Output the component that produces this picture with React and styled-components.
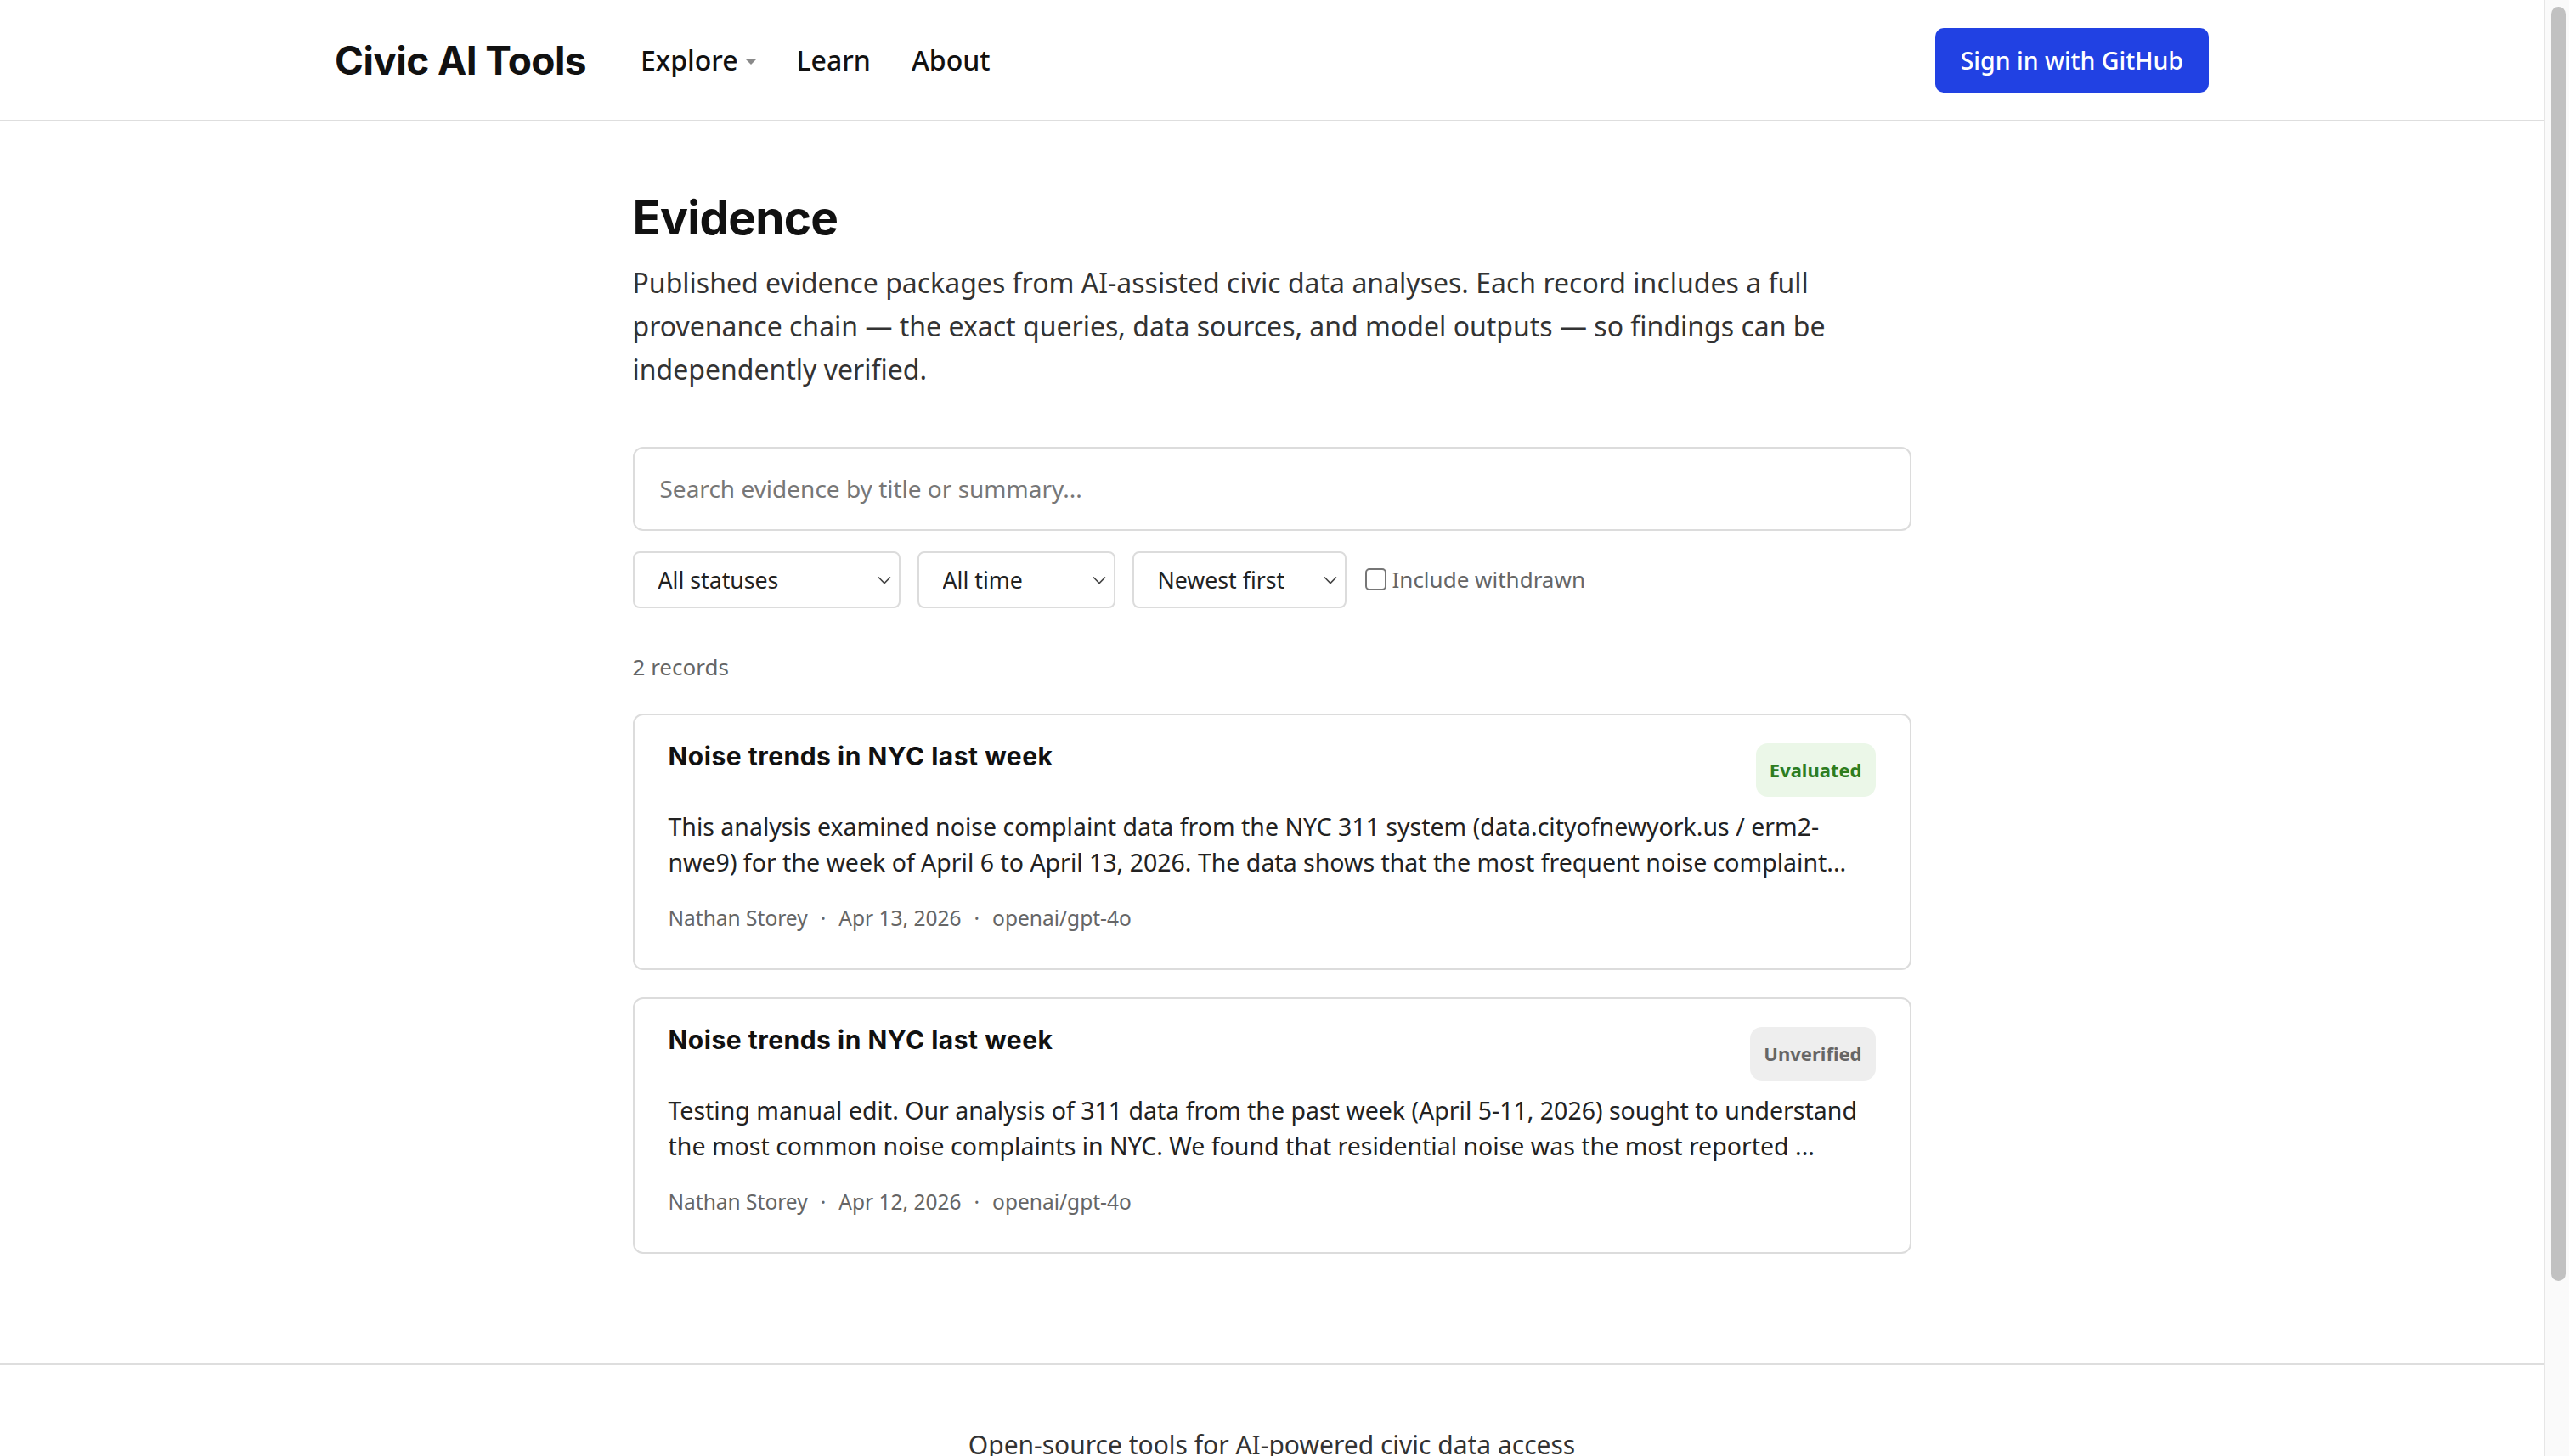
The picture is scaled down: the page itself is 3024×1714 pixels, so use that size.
import React from "react";
import styled, { createGlobalStyle } from "styled-components";

const GlobalStyle = createGlobalStyle`
  html, body {
    margin: 0;
    padding: 0;
    background: #ffffff;
  }
  body {
    font-family: "Noto Sans", "Open Sans", sans-serif;
    color: #111;
  }
  * { box-sizing: border-box; }
`;

/* Browser scrollbar as shown in the screenshot (overlay on the right edge) */
const ScrollTrack = styled.div`
  position: fixed;
  top: 0;
  right: 0;
  width: 30px;
  height: 100vh;
  background: #fafafa;
  border-left: 2px solid #e6e6e6;
  z-index: 10;
`;

const ScrollThumb = styled.div`
  position: absolute;
  top: 8px;
  left: 7px;
  width: 17px;
  height: 1500px;
  border-radius: 9px;
  background: #c1c1c1;
`;

const Page = styled.div`
  margin-right: 30px;
  display: flex;
  flex-direction: column;
`;

const Header = styled.header`
  height: 143px;
  border-bottom: 2px solid #dedede;
`;

const HeaderInner = styled.div`
  max-width: 2206px;
  height: 100%;
  margin: 0 auto;
  display: flex;
  align-items: center;
`;

const Brand = styled.a`
  font-family: "Inter", "Liberation Sans", sans-serif;
  font-weight: 700;
  font-size: 46px;
  letter-spacing: -0.6px;
  color: #111;
  text-decoration: none;
  margin-right: 64px;
`;

const Nav = styled.nav`
  display: flex;
  align-items: center;
  gap: 48px;
  flex: 1;
`;

const NavLink = styled.a`
  font-size: 32px;
  font-weight: 500;
  color: #111;
  text-decoration: none;
  display: inline-flex;
  align-items: center;
`;

const Caret = styled.span`
  display: inline-block;
  width: 0;
  height: 0;
  margin-left: 9px;
  margin-top: 4px;
  border-left: 6px solid transparent;
  border-right: 6px solid transparent;
  border-top: 6px solid #8a8a8a;
`;

const SignIn = styled.button`
  height: 76px;
  padding: 0 30px;
  border: none;
  border-radius: 10px;
  background: #2141e3;
  color: #fff;
  font-family: "Noto Sans", sans-serif;
  font-size: 28.5px;
  font-weight: 500;
  cursor: pointer;
`;

const Main = styled.main`
  width: 1505px;
  margin: 0 auto;
  padding: 80px 0 129px;
`;

const Title = styled.h1`
  font-family: "Inter", "Liberation Sans", sans-serif;
  font-weight: 700;
  font-size: 55px;
  letter-spacing: -0.8px;
  line-height: 67px;
  margin: 0 0 17px;
`;

const Intro = styled.p`
  font-size: 32px;
  line-height: 51.2px;
  color: #333;
  margin: 0 0 65px;
`;

const SearchInput = styled.input`
  display: block;
  width: 100%;
  height: 99px;
  padding: 0 30px;
  border: 2px solid #dcdcdc;
  border-radius: 12px;
  font-family: "Noto Sans", sans-serif;
  font-size: 28px;
  color: #333;
  outline: none;
  &::placeholder { color: #777; }
`;

const Filters = styled.div`
  display: flex;
  align-items: center;
  gap: 20px;
  margin-top: 24px;
`;

const SelectWrap = styled.div`
  position: relative;
  width: ${(p) => p.$w}px;
`;

const Select = styled.select`
  appearance: none;
  width: 100%;
  height: 67px;
  padding: 0 44px 0 28px;
  border: 2px solid #dcdcdc;
  border-radius: 8px;
  background: #fff;
  font-family: "Noto Sans", sans-serif;
  font-size: 26.7px;
  color: #222;
  outline: none;
`;

const Chevron = styled.svg`
  position: absolute;
  right: 11px;
  top: 29px;
  pointer-events: none;
`;

const CheckLabel = styled.label`
  display: inline-flex;
  align-items: center;
  gap: 7px;
  margin-left: 2px;
  font-size: 26px;
  color: #666;
`;

const Check = styled.input`
  appearance: none;
  width: 25px;
  height: 26px;
  margin: 0;
  border: 2px solid #767676;
  border-radius: 5px;
  background: #fff;
`;

const Count = styled.div`
  font-size: 26px;
  line-height: 38px;
  color: #666;
  margin: 50px 0 36px;
`;

const CardList = styled.div`
  display: flex;
  flex-direction: column;
  gap: 32px;
`;

const Card = styled.article`
  border: 2px solid #dcdcdc;
  border-radius: 12px;
  padding: 33px 40px 41px;
  background: #fff;
`;

const CardHead = styled.div`
  display: flex;
  justify-content: space-between;
  align-items: flex-start;
  margin-bottom: 14px;
`;

const CardTitle = styled.h2`
  font-family: "Inter", "Liberation Sans", sans-serif;
  font-weight: 700;
  font-size: 30px;
  letter-spacing: 0.5px;
  line-height: 30px;
  margin: 0;
  color: #111;
`;

const Badge = styled.span`
  font-size: 22px;
  font-weight: 700;
  line-height: 37px;
  padding: 13px 16px;
  border-radius: 14px;
  color: ${(p) => (p.$tone === "good" ? "#2e7d1f" : "#666")};
  background: ${(p) => (p.$tone === "good" ? "#ebf7e8" : "#eeeeee")};
`;

const Summary = styled.p`
  font-size: 28.5px;
  line-height: 42px;
  color: #222;
  margin: 0 0 27px;
`;

const Meta = styled.div`
  display: flex;
  align-items: center;
  font-size: 24.5px;
  line-height: 36px;
  color: #666;
`;

const Dot = styled.span`
  margin: 0 15px;
`;

const Footer = styled.footer`
  border-top: 2px solid #dedede;
  padding: 73px 0 210px;
  text-align: center;
`;

const FooterText = styled.p`
  margin: 0;
  font-size: 30px;
  line-height: 42px;
  color: #333;
`;

const ChevronIcon = () => (
  <Chevron width="16" height="10" viewBox="0 0 16 10">
    <polyline points="1,1.5 8,8.5 15,1.5" fill="none" stroke="#444" strokeWidth="1.6" />
  </Chevron>
);

const records = [
  {
    title: "Noise trends in NYC last week",
    status: "Evaluated",
    tone: "good",
    summary:
      "This analysis examined noise complaint data from the NYC 311 system (data.cityofnewyork.us / erm2-nwe9) for the week of April 6 to April 13, 2026. The data shows that the most frequent noise complaint...",
    author: "Nathan Storey",
    date: "Apr 13, 2026",
    model: "openai/gpt-4o",
  },
  {
    title: "Noise trends in NYC last week",
    status: "Unverified",
    tone: "neutral",
    summary:
      "Testing manual edit. Our analysis of 311 data from the past week (April 5-11, 2026) sought to understand the most common noise complaints in NYC. We found that residential noise was the most reported ...",
    author: "Nathan Storey",
    date: "Apr 12, 2026",
    model: "openai/gpt-4o",
  },
];

export default function App() {
  return (
    <>
      <GlobalStyle />
      <ScrollTrack>
        <ScrollThumb />
      </ScrollTrack>
      <Page>
        <Header>
          <HeaderInner>
            <Brand href="#">Civic AI Tools</Brand>
            <Nav>
              <NavLink href="#">
                Explore
                <Caret />
              </NavLink>
              <NavLink href="#">Learn</NavLink>
              <NavLink href="#">About</NavLink>
            </Nav>
            <SignIn>Sign in with GitHub</SignIn>
          </HeaderInner>
        </Header>
        <Main>
          <Title>Evidence</Title>
          <Intro>
            Published evidence packages from AI-assisted civic data analyses. Each record includes a full
            provenance chain — the exact queries, data sources, and model outputs — so findings can be
            independently verified.
          </Intro>
          <SearchInput placeholder="Search evidence by title or summary..." />
          <Filters>
            <SelectWrap $w={315}>
              <Select defaultValue="all">
                <option value="all">All statuses</option>
                <option value="evaluated">Evaluated</option>
                <option value="unverified">Unverified</option>
              </Select>
              <ChevronIcon />
            </SelectWrap>
            <SelectWrap $w={233}>
              <Select defaultValue="all">
                <option value="all">All time</option>
                <option value="week">Past week</option>
              </Select>
              <ChevronIcon />
            </SelectWrap>
            <SelectWrap $w={252}>
              <Select defaultValue="new">
                <option value="new">Newest first</option>
                <option value="old">Oldest first</option>
              </Select>
              <ChevronIcon />
            </SelectWrap>
            <CheckLabel>
              <Check type="checkbox" />
              Include withdrawn
            </CheckLabel>
          </Filters>
          <Count>2 records</Count>
          <CardList>
            {records.map((r, i) => (
              <Card key={i}>
                <CardHead>
                  <CardTitle>{r.title}</CardTitle>
                  <Badge $tone={r.tone}>{r.status}</Badge>
                </CardHead>
                <Summary>{r.summary}</Summary>
                <Meta>
                  <span>{r.author}</span>
                  <Dot>·</Dot>
                  <span>{r.date}</span>
                  <Dot>·</Dot>
                  <span>{r.model}</span>
                </Meta>
              </Card>
            ))}
          </CardList>
        </Main>
        <Footer>
          <FooterText>Open-source tools for AI-powered civic data access</FooterText>
        </Footer>
      </Page>
    </>
  );
}
